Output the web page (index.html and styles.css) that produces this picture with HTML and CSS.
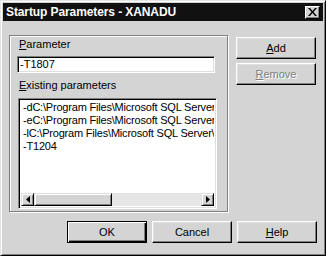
FILE: index.html
```html
<!DOCTYPE html>
<html>
<head>
<meta charset="utf-8">
<link rel="stylesheet" href="styles.css">
</head>
<body>
<div class="window">
  <div class="titlebar">
    <span class="title">Startup Parameters - XANADU</span>
    <div class="close"><svg width="9" height="8" viewBox="0 0 9 8"><path d="M0 0h2l2.5 3 2.5-3h2L5.5 4 9 8H7L4.5 5 2 8H0l3.5-4z" fill="#000"/></svg></div>
  </div>
  <div class="content">
    <div class="top">
      <div class="group">
        <div class="label"><u>P</u>arameter</div>
        <div class="field">-T1807</div>
        <div class="label label2"><u>E</u>xisting parameters</div>
        <div class="listbox">
          <div class="items">
            <div class="item">-dC:\Program Files\Microsoft SQL Server\MSSQL\Data\master.mdf</div>
            <div class="item">-eC:\Program Files\Microsoft SQL Server\MSSQL\Log\ERRORLOG</div>
            <div class="item">-lC:\Program Files\Microsoft SQL Server\MSSQL\Data\mastlog.ldf</div>
            <div class="item">-T1204</div>
          </div>
          <div class="hscroll">
            <div class="sbtn"><svg width="4" height="7" viewBox="0 0 4 7"><path d="M4 0v7L0 3.5z" fill="#000"/></svg></div>
            <div class="thumb"></div>
            <div class="track"></div>
            <div class="sbtn"><svg width="4" height="7" viewBox="0 0 4 7"><path d="M0 0v7l4-3.5z" fill="#000"/></svg></div>
          </div>
        </div>
      </div>
      <div class="side">
        <div class="btn btn-add"><span><u>A</u>dd</span></div>
        <div class="btn btn-remove disabled"><span><u>R</u>emove</span></div>
      </div>
    </div>
    <div class="bottom">
      <div class="btn default"><span>OK</span></div>
      <div class="btn"><span>Cancel</span></div>
      <div class="btn"><span><u>H</u>elp</span></div>
    </div>
  </div>
</div>
</body>
</html>
```

FILE: styles.css
```css
html, body {
  margin: 0;
  padding: 0;
  background: #d4d4d4;
}
body {
  font-family: "Liberation Sans", Arial, sans-serif;
  font-size: 11px;
  color: #000;
}
.window {
  width: 326px;
  height: 256px;
  box-sizing: border-box;
  background: #d4d4d4;
  border: 1px solid;
  border-color: #e4e4e4 #000 #000 #e4e4e4;
  box-shadow: inset 1px 1px #fff, inset -1px -1px #808080;
  padding: 2px;
}
.titlebar {
  height: 18px;
  background: #111;
  color: #fff;
  display: flex;
  align-items: center;
  justify-content: space-between;
  padding: 0 3px 0 3px;
}
.title {
  font-weight: bold;
  font-size: 12px;
  letter-spacing: -0.1px;
}
.close {
  width: 15px;
  height: 13px;
  box-sizing: border-box;
  background: #d4d4d4;
  border: 1px solid;
  border-color: #fff #000 #000 #fff;
  box-shadow: inset -1px -1px #808080;
  display: flex;
  align-items: center;
  justify-content: center;
}
.content {
  padding: 14px 6px 0 6px;
}
.top {
  display: flex;
  gap: 8px;
}
.group {
  width: 219px;
  height: 177px;
  box-sizing: border-box;
  border: 1px solid #808080;
  box-shadow: inset 1px 1px #fff, 1px 1px #fff;
  padding: 2px 0 0 7px;
}
.label {
  height: 13px;
  line-height: 13px;
  padding-left: 2px;
}
.label u, .btn u {
  text-decoration-thickness: 1px;
  text-underline-offset: 1px;
}
.field {
  margin-top: 5px;
  width: 198px;
  height: 17px;
  box-sizing: border-box;
  background: #fff;
  border: 1px solid;
  border-color: #808080 #fff #fff #808080;
  box-shadow: inset 1px 1px #000, inset -1px -1px #dfdfdf;
  line-height: 15px;
  padding-left: 2px;
}
.label2 {
  margin-top: 6px;
}
.listbox {
  margin-top: 6px;
  margin-left: 1px;
  width: 199px;
  height: 111px;
  box-sizing: border-box;
  background: #fff;
  border: 1px solid;
  border-color: #808080 #fff #fff #808080;
  box-shadow: inset 1px 1px #000, inset -1px -1px #dfdfdf;
  padding: 2px;
  display: flex;
  flex-direction: column;
}
.items {
  flex: 1;
  overflow: hidden;
  padding-left: 2px;
}
.item {
  line-height: 13px;
  white-space: nowrap;
  letter-spacing: -0.2px;
}
.hscroll {
  height: 13px;
  display: flex;
}
.sbtn {
  width: 13px;
  height: 13px;
  box-sizing: border-box;
  background: #d4d4d4;
  border: 1px solid;
  border-color: #dfdfdf #000 #000 #dfdfdf;
  box-shadow: inset 1px 1px #fff, inset -1px -1px #808080;
  display: flex;
  align-items: center;
  justify-content: center;
}
.thumb {
  width: 78px;
  height: 13px;
  box-sizing: border-box;
  background: #d4d4d4;
  border: 1px solid;
  border-color: #dfdfdf #000 #000 #dfdfdf;
  box-shadow: inset 1px 1px #fff, inset -1px -1px #808080;
}
.track {
  flex: 1;
  background: #e6e6e6;
}
.side {
  display: flex;
  flex-direction: column;
  gap: 4px;
  padding-top: 2px;
}
.btn {
  width: 80px;
  height: 22px;
  box-sizing: border-box;
  background: #d4d4d4;
  border: 1px solid;
  border-color: #fff #000 #000 #fff;
  box-shadow: inset -1px -1px #808080, inset 1px 1px #dfdfdf;
  display: flex;
  align-items: center;
  justify-content: center;
  line-height: 13px;
}
.disabled {
  color: #808080;
  text-shadow: 1px 1px #fff;
}
.bottom {
  margin-top: 9px;
  display: flex;
  justify-content: flex-end;
  gap: 5px;
}
.default {
  border: 1px solid #000;
  box-shadow: inset 1px 1px #fff, inset -1px -1px #000, inset -2px -2px #808080;
}
```
